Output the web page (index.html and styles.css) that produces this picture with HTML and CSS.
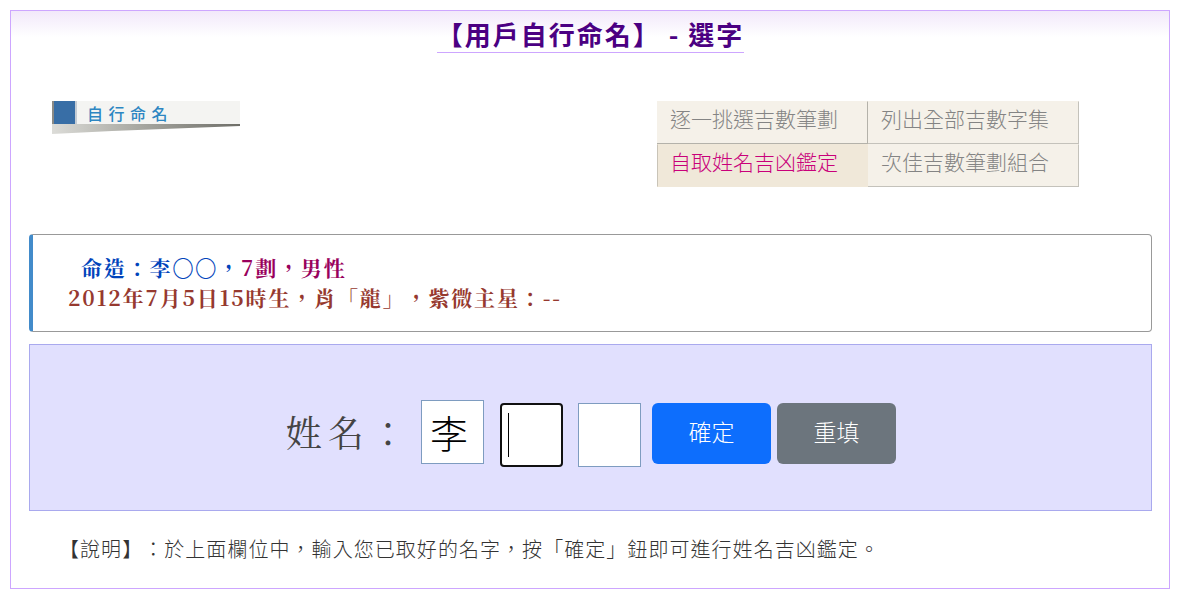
FILE: index.html
```html
<!DOCTYPE html>
<html lang="zh-Hant">
<head>
<meta charset="utf-8">
<title>用戶自行命名 - 選字</title>
<link rel="stylesheet" href="styles.css">
</head>
<body>
<main class="frame">
  <header class="head">
    <h1 class="title">【用戶自行命名】 - 選字</h1>
  </header>
  <section class="top">
    <div class="logo">
      <svg width="188" height="33" viewBox="0 0 188 33" aria-label="自行命名">
        <defs>
          <linearGradient id="shade" x1="0" x2="1" y1="0" y2="0">
            <stop offset="0" stop-color="#dcdcd8"/>
            <stop offset="0.35" stop-color="#b4b4ae"/>
            <stop offset="1" stop-color="#6e6e68"/>
          </linearGradient>
        </defs>
        <rect x="0" y="0" width="188" height="23" fill="#f4f4f2"/>
        <rect x="0" y="0" width="2" height="23" fill="#8a8a86"/>
        <rect x="2" y="0" width="21" height="23" fill="#386ea6"/>
        <rect x="23" y="0" width="2" height="23" fill="#c4ccd4"/>
        <polygon points="0,23 188,23 188,25 60,30 0,33" fill="url(#shade)"/>
        <text x="35" y="19" class="logo-text">自行命名</text>
      </svg>
    </div>
    <nav class="tabs">
      <a class="tab tab-a">逐一挑選吉數筆劃</a>
      <a class="tab tab-b">列出全部吉數字集</a>
      <a class="tab tab-active">自取姓名吉凶鑑定</a>
      <a class="tab tab-d">次佳吉數筆劃組合</a>
    </nav>
  </section>
  <section class="info">
    <p class="line line-1"><span class="blue">命造：李〇〇，</span><span class="plum">7劃，男性</span></p>
    <p class="line line-2">2012年7月5日15時生，肖「龍」，紫微主星：--</p>
  </section>
  <form class="form">
    <span class="label">姓名：</span>
    <input class="cell cell-first" type="text" value="李">
    <span class="cell cell-focus"></span>
    <input class="cell cell-last" type="text">
    <button class="btn btn-blue" type="button">確定</button>
    <button class="btn btn-gray" type="button">重填</button>
  </form>
  <p class="note">【說明】：於上面欄位中，輸入您已取好的名字，按「確定」鈕即可進行姓名吉凶鑑定。</p>
</main>
</body>
</html>
```
FILE: styles.css
```css
* { box-sizing: border-box; }
html, body { margin: 0; padding: 0; background: #fff; }
body {
  padding: 10px 7px 0 10px;
  font-family: "Noto Sans CJK TC", "Liberation Sans", sans-serif;
  text-spacing-trim: space-all;
}
.frame {
  width: 1160px;
  height: 579px;
  border: 1px solid #cda6ff;
  padding: 0 17px 0 18px;
  background: linear-gradient(#f2e8fa 0, #ffffff 26px);
  background-repeat: no-repeat;
}
.head { display: flex; justify-content: center; padding-top: 8px; height: 42px; }
.title {
  margin: 0;
  height: 34px;
  font-size: 26px;
  line-height: 30px;
  font-weight: 700;
  letter-spacing: 2px;
  color: #4b0082;
  border-bottom: 1px solid #cda6ff;
  white-space: pre;
}
.top {
  display: flex;
  justify-content: space-between;
  align-items: flex-start;
  padding: 48px 73px 0 23px;
  height: 181px;
}
.logo { height: 33px; }
.logo svg { display: block; }
.logo-text {
  font-family: "Noto Sans CJK TC", sans-serif;
  font-size: 16px;
  font-weight: 500;
  letter-spacing: 5.5px;
  fill: #2d86c2;
}
.tabs {
  display: grid;
  grid-template-columns: 211px 211px;
  grid-auto-rows: 43px;
}
.tab {
  display: flex;
  align-items: center;
  padding: 0 0 8px 13px;
  font-size: 21px;
  font-weight: 300;
  line-height: 1;
  color: #848484;
  background: #f5f1e9;
  border-style: solid;
  border-width: 1px 1px 1px 0;
  border-color: #f5f1e9 #c4c2bb #c4c2bb #f5f1e9;
}
.tab-a { border-right-color: #b4b2aa; border-bottom-color: #b4b2aa; }
.tab-active {
  color: #c9007a;
  background: #f0e8d9;
  border-color: #f0e8d9;
  border-left: 1px solid #c9c4b8;
  padding-left: 12px;
}
.info {
  height: 98px;
  border: 1px solid #999;
  border-left: 4px solid #428bca;
  border-radius: 4px;
  padding: 17px 0 0 35px;
  font-family: "Noto Serif CJK TC", "Liberation Serif", "Noto Sans CJK TC", serif;
  font-weight: 700;
  font-size: 21px;
  letter-spacing: 1.85px;
}
.line { margin: 0; line-height: 30px; white-space: pre; }
.line-1 { padding-left: 13px; }
.blue { color: #0044bb; }
.plum { color: #99005c; }
.line-2 { color: #96392f; }
.form {
  margin-top: 12px;
  height: 167px;
  background: #e1e0fe;
  border: 1px solid #a9a9ee;
  display: flex;
  align-items: center;
  padding-left: 256px;
  padding-top: 14px;
}
.label {
  font-family: "Noto Serif CJK TC", "Noto Sans CJK TC", serif;
  font-size: 36px;
  letter-spacing: 6px;
  color: #444;
  width: 135px;
  margin-bottom: 6px;
}
.cell {
  display: block;
  width: 63px;
  height: 64px;
  border: 1px solid #7e9cc0;
  background: #fff;
  padding: 0 0 0 8px;
  margin-right: 16px;
  font-family: "Noto Sans CJK TC", sans-serif;
  font-size: 38px;
  font-weight: 300;
  color: #000;
  border-radius: 0;
  outline: none;
}
.cell-first { margin-bottom: 6px; }
.cell-focus {
  position: relative;
  border: 2px solid #111;
  border-radius: 4px;
  margin-right: 15px;
}
.cell-focus::after {
  content: "";
  position: absolute;
  left: 6px;
  top: 8px;
  width: 1px;
  height: 44px;
  background: #000;
}
.cell-last { margin-right: 11px; }
.btn {
  width: 119px;
  height: 61px;
  border: 0;
  border-radius: 6px;
  padding: 0 0 5px;
  font-family: "Noto Sans CJK TC", sans-serif;
  font-size: 23px;
  font-weight: 300;
  color: #fff;
  margin-right: 6px;
  margin-bottom: 3px;
}
.btn-blue { background: #0d6efd; }
.btn-gray { background: #6c757d; }
.note {
  margin: 24px 0 0 30px;
  font-size: 20px;
  font-weight: 300;
  line-height: 28px;
  letter-spacing: 1.05px;
  color: #333;
  white-space: pre;
}
```
